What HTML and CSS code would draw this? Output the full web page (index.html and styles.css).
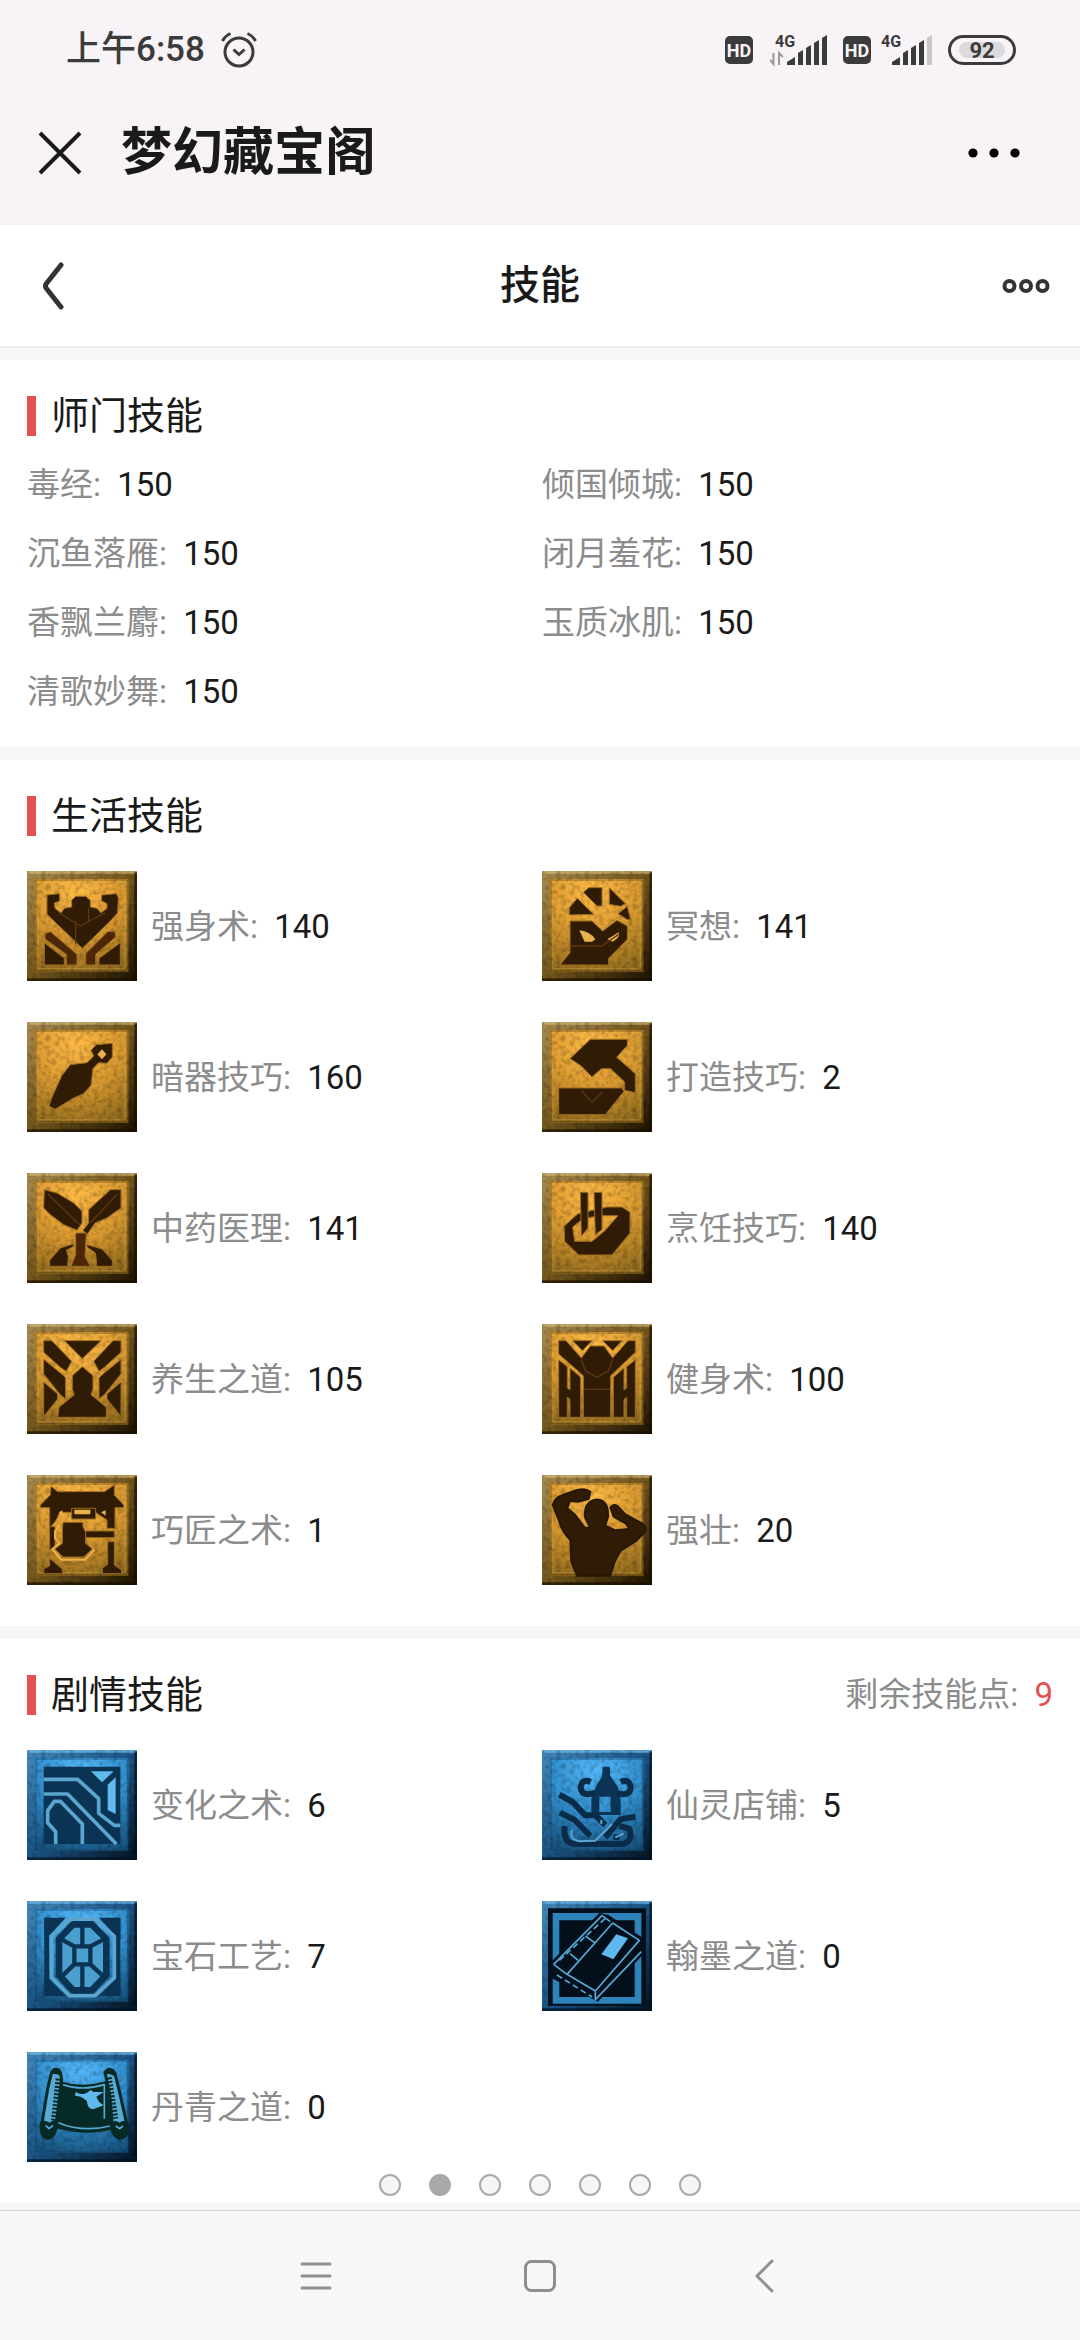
FILE: index.html
```html
<!DOCTYPE html>
<html lang="zh-CN">
<head>
  <meta charset="UTF-8">
  <title>梦幻藏宝阁 - 技能</title>
  <meta name="viewport" content="width=device-width, initial-scale=1">
  <link rel="stylesheet" href="styles.css">
</head>
<body>
  <!-- shared tile backgrounds and filters -->
  <svg class="defs" width="0" height="0" aria-hidden="true">
    <defs>
      <radialGradient id="goldFace" cx="45%" cy="12%" r="95%">
        <stop offset="0" stop-color="#ffba45"/>
        <stop offset="0.5" stop-color="#dd9c31"/>
        <stop offset="1" stop-color="#8f6a1e"/>
      </radialGradient>
      <linearGradient id="goldEdge" x1="0" y1="0" x2="1" y2="1">
        <stop offset="0" stop-color="#a98c50"/>
        <stop offset="0.5" stop-color="#76581e"/>
        <stop offset="1" stop-color="#1d1302"/>
      </linearGradient>
      <radialGradient id="blueFace" cx="50%" cy="10%" r="100%">
        <stop offset="0" stop-color="#52b8fa"/>
        <stop offset="0.5" stop-color="#3290cf"/>
        <stop offset="1" stop-color="#164f79"/>
      </radialGradient>
      <linearGradient id="blueEdge" x1="0" y1="0" x2="1" y2="1">
        <stop offset="0" stop-color="#4489bb"/>
        <stop offset="0.5" stop-color="#1c5687"/>
        <stop offset="1" stop-color="#041423"/>
      </linearGradient>
      <filter id="noise" x="0" y="0" width="100%" height="100%">
        <feTurbulence type="fractalNoise" baseFrequency="0.07" numOctaves="3" seed="4"/>
        <feColorMatrix values="0 0 0 0 0  0 0 0 0 0  0 0 0 0 0  1.8 0 0 0 -0.75"/>
      </filter>
      <filter id="soft" x="-5%" y="-5%" width="110%" height="110%">
        <feGaussianBlur stdDeviation="2"/>
      </filter>
    </defs>
    <symbol id="gold" viewBox="0 0 330 330">
      <rect width="330" height="330" fill="url(#goldEdge)"/>
      <path d="M0 0H330V8H0z" fill="#d3b878" opacity="0.7"/>
      <path d="M322 4H330V330H0V322H322z" fill="#191002" opacity="0.7"/>
      <rect x="24" y="24" width="280" height="278" fill="url(#goldFace)" filter="url(#soft)"/>
      <rect x="27" y="27" width="274" height="272" fill="none" stroke="#5d420f" stroke-width="3" opacity="0.6"/>
      <rect x="33" y="33" width="262" height="260" fill="none" stroke="#e8b65a" stroke-width="4" opacity="0.3"/>
      <rect width="330" height="330" filter="url(#noise)" opacity="0.3"/>
    </symbol>
    <symbol id="blue" viewBox="0 0 330 330">
      <rect width="330" height="330" fill="url(#blueEdge)"/>
      <path d="M0 0H330V8H0z" fill="#6fb7e6" opacity="0.8"/>
      <path d="M322 4H330V330H0V322H322z" fill="#031222" opacity="0.7"/>
      <rect x="24" y="24" width="280" height="278" fill="url(#blueFace)" filter="url(#soft)"/>
      <rect x="27" y="27" width="274" height="272" fill="none" stroke="#114a75" stroke-width="3" opacity="0.7"/>
      <rect width="330" height="330" filter="url(#noise)" opacity="0.3"/>
    </symbol>
    <symbol id="bars" viewBox="0 0 40 30">
      <path d="M0 30V27L8 22V30zM11 30V18L16 15V30zM19 30V13L24 10V30zM27 30V8L32 5V30z"/>
    </symbol>
  </svg>

  <header class="app-header">
    <div class="status-bar">
      <div class="status-left">
        <span class="clock">上午6:58</span>
        <svg class="alarm" viewBox="0 0 36 36" width="36" height="36">
          <circle cx="18" cy="20" r="14"/>
          <path d="M12.500 17.500L18 22.500L23.500 17.500M1.500 9Q4 4 9.500 1.500M34.500 9Q32 4 26.500 1.500"/>
        </svg>
      </div>
      <div class="status-right">
        <span class="hd">HD</span>
        <svg class="signal first" viewBox="0 -8 58 50" width="58" height="50">
          <text x="5" y="14">4G</text>
          <use href="#bars" x="17" y="2" width="40" height="30"/>
          <path d="M52 32V5L57 2V32z"/>
          <path class="traffic" d="M3.500 20V31L0 27M9 32V20L13 24"/>
        </svg>
        <span class="hd">HD</span>
        <svg class="signal" viewBox="0 -8 53 50" width="53" height="50">
          <text x="1" y="14">4G</text>
          <use href="#bars" x="12" y="2" width="40" height="30"/>
          <path class="faint" d="M47 32V5L52 2V32z"/>
        </svg>
        <span class="battery"><span class="level">92</span></span>
      </div>
    </div>
    <div class="title-bar">
      <button class="icon-btn" aria-label="关闭">
        <svg viewBox="0 0 44 44" width="44" height="44"><path d="M2 2L42 42M42 2L2 42" stroke="#1a1a1c" stroke-width="4"/></svg>
      </button>
      <h1>梦幻藏宝阁</h1>
      <button class="icon-btn" aria-label="更多">
        <svg viewBox="0 0 52 10" width="52" height="10" fill="#000"><circle cx="5" cy="5" r="4.600"/><circle cx="26" cy="5" r="4.600"/><circle cx="47" cy="5" r="4.600"/></svg>
      </button>
    </div>
  </header>

  <nav class="page-nav">
    <button class="icon-btn back" aria-label="返回">
      <svg viewBox="0 0 22 48" width="22" height="48"><path d="M19 3L4 22Q3 24 4 26L19 45" fill="none" stroke="#333" stroke-width="5" stroke-linecap="round"/></svg>
    </button>
    <h2>技能</h2>
    <button class="icon-btn menu" aria-label="菜单">
      <svg viewBox="0 0 48 16" width="48" height="16" fill="none" stroke="#333" stroke-width="4"><circle cx="7.500" cy="8" r="5"/><circle cx="24" cy="8" r="5"/><circle cx="40.500" cy="8" r="5"/></svg>
    </button>
  </nav>

  <main>
    <section class="panel">
      <div class="panel-head"><h3>师门技能</h3></div>
      <ul class="skills plain">
        <li>毒经: <b>150</b></li>
        <li>倾国倾城: <b>150</b></li>
        <li>沉鱼落雁: <b>150</b></li>
        <li>闭月羞花: <b>150</b></li>
        <li>香飘兰麝: <b>150</b></li>
        <li>玉质冰肌: <b>150</b></li>
        <li>清歌妙舞: <b>150</b></li>
      </ul>
    </section>

    <section class="panel">
      <div class="panel-head"><h3>生活技能</h3></div>
      <ul class="skills with-icons">
        <li>
          <svg class="tile gold" viewBox="0 0 330 330">
            <use href="#gold"/>
            <path d="M60 72L98 68V90L82 96L84 112L102 126L112 112L134 108V88L146 76H176L190 88V108L210 112L222 126L240 112V98L224 90V72L268 68L274 80L272 125L250 150L166 232L60 130z"/>
            <path d="M54 188L70 182L150 250V282H118V250L54 204zM264 182H242L176 248V282H206V250L266 198z" class="warm"/>
            <path d="M52 215L112 262V282H52zM280 215L216 262V282H280z"/>
            <path class="crease" d="M95 125L160 165L235 125M146 150V220M185 110V150"/>
          </svg>
          <span>强身术: <b>140</b></span>
        </li>
        <li>
          <svg class="tile gold" viewBox="0 0 330 330">
            <use href="#gold"/>
            <path d="M82 132V110L106 82L155 130zM124 64L140 50H180V105H165zM202 50L250 98L236 106L202 100zM228 128L256 106L266 146H256z"/>
            <path d="M84 150H150L182 180L225 148L256 165V205L200 262V282H54L84 245z"/>
            <path class="light" d="M112 178Q145 182 160 205L150 212H128zM196 205L230 184Q236 200 212 212z"/>
            <path class="crease" d="M86 225H180L230 190"/>
          </svg>
          <span>冥想: <b>141</b></span>
        </li>
        <li>
          <svg class="tile gold" viewBox="0 0 330 330">
            <use href="#gold"/>
            <path d="M66 252L75 225L105 160L130 128L180 122L200 102L192 85L208 68L256 64V105L240 124L215 122L198 140L192 190L170 215L140 228L84 262z"/>
            <path class="light" d="M225 82L238 97L225 112L211 97z"/>
          </svg>
          <span>暗器技巧: <b>160</b></span>
        </li>
        <li>
          <svg class="tile gold" viewBox="0 0 330 330">
            <use href="#gold"/>
            <path d="M84 110L145 52H256V70L224 106L280 155V212L248 205V180L206 140H178L150 165L118 132z"/>
            <path d="M50 198H240L246 208L190 278H50z"/>
            <path class="crease" d="M118 205L150 242L180 210"/>
          </svg>
          <span>打造技巧: <b>2</b></span>
        </li>
        <li>
          <svg class="tile gold" viewBox="0 0 330 330">
            <use href="#gold"/>
            <path d="M52 50L90 60L140 90L165 115V150L150 172L110 155L70 125L50 105z"/>
            <path d="M282 50H250L185 110V150L168 172L180 185L204 150L240 135L282 105z"/>
            <path class="warm" d="M146 180H178L174 250L190 280H132L146 245z"/>
            <path d="M68 280V262L100 225L140 212V220L118 232L124 250L122 280zM256 280V262L225 228L180 215V222L205 240L208 262V280z"/>
            <path class="crease" d="M62 62L158 155M272 62L190 150"/>
          </svg>
          <span>中药医理: <b>141</b></span>
        </li>
        <li>
          <svg class="tile gold" viewBox="0 0 330 330">
            <use href="#gold"/>
            <path fill-rule="evenodd" d="M66 160L108 122L195 102H240L264 118V180L210 246H110L68 205zM92 162L122 138L170 128H228L190 172L150 205H98z"/>
            <path d="M115 58H138V165L118 190zM156 58H180V170L160 185z"/>
          </svg>
          <span>烹饪技巧: <b>140</b></span>
        </li>
        <li>
          <svg class="tile gold" viewBox="0 0 330 330">
            <use href="#gold"/>
            <path d="M112 50H222L166 104z"/>
            <path d="M50 50H74L134 112L118 142L100 130L50 85zM50 106L104 150L116 162V225L100 212L50 150zM50 174L92 210V225L50 278z"/>
            <path d="M282 50H258L200 112L216 142L232 130L282 85zM282 106L228 150L216 162V225L232 212L282 150zM282 174L240 210V225L282 278z"/>
            <path d="M166 128L198 155V195L192 212L238 250V280H92L96 250L142 212L136 195V155z"/>
          </svg>
          <span>养生之道: <b>105</b></span>
        </li>
        <li>
          <svg class="tile gold" viewBox="0 0 330 330">
            <use href="#gold"/>
            <path d="M50 50H72L118 102L145 66H186L212 102L258 50H280V85L206 155V280H124V155L50 90z"/>
            <path class="crease" d="M118 105L130 140L165 160L200 140L212 105M126 196H204"/>
            <path d="M92 50H150L121 80zM182 50H240L212 80z"/>
            <path d="M50 108L76 128V192L84 198V132L116 160V280H84V226L76 220V280H50zM280 108L254 128V192L246 198V132L214 160V280H246V226L254 220V280H280z"/>
          </svg>
          <span>健身术: <b>100</b></span>
        </li>
        <li>
          <svg class="tile gold" viewBox="0 0 330 330">
            <use href="#gold"/>
            <path d="M72 34L92 50H232L262 30V60L290 90V98H264V160H240V135L205 112H98L88 135L68 160V98H40V90L70 60z"/>
            <path d="M242 200H262V270L284 285V296H226V280L242 268zM68 250L106 282V296H50V282L68 272zM68 155H84V215L68 225z"/>
            <path d="M134 100H206V132H134z"/>
            <path d="M174 168H262V188H174z"/>
            <path class="outline" d="M98 150L84 170V190L98 205L76 222L102 254H175L202 224"/>
            <path d="M108 142H168V155L176 172V205L196 222L170 246H108L84 222L106 205V170z"/>
            <path class="light" d="M142 104H190V118H142zM96 112L106 106V122zM222 112L236 106V122z"/>
          </svg>
          <span>巧匠之术: <b>1</b></span>
        </li>
        <li>
          <svg class="tile gold" viewBox="0 0 330 330">
            <use href="#gold"/>
            <path class="figure" d="M32 90Q40 66 62 60L105 45Q130 38 145 50L140 72L108 80L84 78Q78 92 76 100L100 120L128 158L145 158L130 130Q124 95 145 80Q165 68 182 78Q200 90 198 125L190 152L220 166L262 162L252 146L215 125L205 98Q215 84 228 94L250 118L300 145Q316 158 308 172L282 198L235 228L218 260L205 302H105L88 260L85 195Q60 170 52 140z"/>
          </svg>
          <span>强壮: <b>20</b></span>
        </li>
      </ul>
    </section>

    <section class="panel">
      <div class="panel-head">
        <h3>剧情技能</h3>
        <p class="points">剩余技能点: <b>9</b></p>
      </div>
      <ul class="skills with-icons">
        <li>
          <svg class="tile blue" viewBox="0 0 330 330">
            <use href="#blue"/>
            <path d="M50 50H280V282H50z"/>
            <path class="light" d="M192 64H260L225 97zM242 104L266 82V192L242 180z"/>
            <path class="outline" d="M50 88H152L215 146V190L262 226H280M50 132H122L268 282M86 282V245L62 218V182L82 154H100L166 222V282"/>
          </svg>
          <span>变化之术: <b>6</b></span>
        </li>
        <li>
          <svg class="tile blue" viewBox="0 0 330 330">
            <use href="#blue"/>
            <path fill-rule="evenodd" d="M182 50H204V76L228 112L236 150V195H148V145L164 105L180 80zM172 140H206V186H172z"/>
            <path class="curl" d="M160 128Q118 142 116 112Q120 84 146 96M226 130Q266 140 266 112Q262 84 236 96"/>
            <path class="curl" d="M52 134L92 156L130 196H160L190 225M54 188L98 210L145 258M280 200L235 208L190 262M68 228Q62 280 100 282H240Q274 276 262 236L232 228M232 262H214"/>
            <path class="outline thin" d="M90 240Q80 268 112 274L160 272L210 222M220 262L245 250M178 210V222"/>
          </svg>
          <span>仙灵店铺: <b>5</b></span>
        </li>
        <li>
          <svg class="tile blue" viewBox="0 0 330 330">
            <use href="#blue"/>
            <path d="M52 50H116L76 94L52 116zM280 50H216L256 94L280 116zM52 285H116L76 244L52 222zM280 285H216L256 244L280 222z"/>
            <path d="M52 50H66V285H52zM266 50H280V285H266z"/>
            <path class="outline" d="M128 54H204L262 106V230L204 284H128L74 230V106z"/>
            <path class="ring" d="M138 70H194L238 114V222L194 268H138L96 222V114z"/>
            <path class="spoke" d="M166 70V130M166 196V268M142 136H190V190H142zM142 136L98 112M190 136L236 112M142 190L98 232M190 190L236 232"/>
          </svg>
          <span>宝石工艺: <b>7</b></span>
        </li>
        <li>
          <svg class="tile blue" viewBox="0 0 330 330">
            <use href="#blue"/>
            <path class="night" d="M18 22H312V314H18z"/>
            <path class="sheen" d="M32 36H298V308H32z"/>
            <path class="night" d="M52 58H278V288H52z"/>
            <path class="night" d="M30 180L172 36L200 42L304 112V160L168 302L30 232z"/>
            <path class="pen" d="M75 220L212 66L292 118L160 270zM160 270V296L298 152M35 190L180 44L205 62M35 190L75 220M130 105L158 125M84 158L108 178"/>
            <path class="pen dashed" d="M52 178L190 52M45 222L150 288"/>
            <path class="light" d="M223 100L258 112L214 175L178 160z"/>
          </svg>
          <span>翰墨之道: <b>0</b></span>
        </li>
        <li>
          <svg class="tile blue" viewBox="0 0 330 330">
            <use href="#blue"/>
            <path class="green" d="M100 88Q165 108 238 88L256 232Q180 254 84 228z"/>
            <path class="pen" d="M108 98Q165 118 232 98V200M94 212Q165 242 250 222"/>
            <path class="light" d="M145 120Q172 134 190 114L200 120H230L208 134L216 150L230 160L198 172Q180 170 180 148Q165 132 145 132z"/>
            <path class="roll" d="M74 60L100 64L104 82L88 215L44 220L62 110zM234 60L264 64L280 130L300 220L256 222L248 130z"/>
            <path class="green" d="M70 62Q76 44 92 48Q108 54 106 76L92 66zM232 64Q236 44 252 48Q270 54 268 76L250 66zM38 212Q50 200 68 212Q84 196 94 214Q90 262 60 264Q34 256 38 212zM248 216Q262 200 278 212Q294 198 308 216Q310 258 280 264Q250 258 248 216z"/>
            <path class="pen hatch" d="M94 80L80 205M246 76L266 200"/>
            <path class="pen" d="M56 220L66 230L78 220M266 222L278 230L288 222"/>
          </svg>
          <span>丹青之道: <b>0</b></span>
        </li>
      </ul>
    </section>

    <div class="pager">
      <button aria-label="第1页"></button>
      <button class="active" aria-label="第2页"></button>
      <button aria-label="第3页"></button>
      <button aria-label="第4页"></button>
      <button aria-label="第5页"></button>
      <button aria-label="第6页"></button>
      <button aria-label="第7页"></button>
    </div>
  </main>

  <footer class="system-nav">
    <button class="icon-btn" aria-label="最近任务">
      <svg viewBox="0 0 34 34" width="34" height="34"><path d="M3 5H31M3 17H31M3 29H31"/></svg>
    </button>
    <button class="icon-btn" aria-label="主屏幕">
      <svg viewBox="0 0 34 34" width="34" height="34"><rect x="2.500" y="2.500" width="29" height="29" rx="6"/></svg>
    </button>
    <button class="icon-btn" aria-label="返回上一级">
      <svg viewBox="0 0 34 34" width="34" height="34"><path d="M25 2L10 17L25 32"/></svg>
    </button>
  </footer>
</body>
</html>
```

FILE: styles.css
```css
:root {
  --header: #f7f3f7;
  --gap: #f6f6f6;
  --text: #1a1a1a;
  --muted: #8c8c8c;
  --red: #e55050;
  --status: #3b3b3b;
}
* {
  box-sizing: border-box;
}
body {
  margin: 0;
  min-height: 100vh;
  display: flex;
  flex-direction: column;
  background: var(--gap);
  color: var(--text);
  font-family: Roboto, "Noto Sans CJK SC", sans-serif;
  font-size: 33px;
}
h1, h2, h3, p, ul {
  margin: 0;
  padding: 0;
}
ul {
  list-style: none;
}
b {
  font-weight: 400;
}
svg {
  display: block;
  flex: none;
}
.defs {
  position: absolute;
}
.icon-btn {
  display: flex;
  padding: 0;
  border: none;
  background: none;
  cursor: pointer;
}

/* header */
.app-header {
  background: var(--header);
  height: 225px;
}
.status-bar {
  height: 100px;
  padding: 0 64px 0 66px;
  display: flex;
  align-items: center;
  justify-content: space-between;
  color: var(--status);
}
.status-left, .status-right {
  display: flex;
  align-items: center;
}
.status-left {
  gap: 16px;
}
.clock {
  font-size: 35px;
  font-weight: 500;
  line-height: 40px;
}
.alarm {
  fill: none;
  stroke: var(--status);
  stroke-width: 3;
}
.hd {
  width: 28px;
  height: 28px;
  border-radius: 5px;
  background: var(--status);
  color: var(--header);
  font-size: 18px;
  font-weight: 700;
  line-height: 29px;
  text-align: center;
}
.signal {
  margin: 0 15px 0 9px;
  fill: var(--status);
  font-size: 16px;
  font-weight: 700;
}
.signal.first {
  margin-left: 17px;
}
.signal .faint {
  fill: #c9c5c9;
}
.signal .traffic {
  fill: none;
  stroke: #9b989b;
  stroke-width: 2;
}
.battery {
  width: 68px;
  height: 30px;
  padding: 4px 8px;
  border: 3px solid var(--status);
  border-radius: 15px;
}
.level {
  display: block;
  height: 16px;
  border-radius: 8px;
  background: #dcdadc;
  font-size: 22px;
  font-weight: 700;
  line-height: 17px;
  text-align: center;
}
.title-bar {
  height: 106px;
  padding: 0 60px 0 38px;
  display: flex;
  align-items: center;
}
.title-bar h1 {
  flex: 1;
  margin-left: 39px;
  font-size: 51px;
  font-weight: 700;
  line-height: 60px;
}

/* page nav */
.page-nav {
  height: 123px;
  padding: 0 30px;
  display: grid;
  grid-template-columns: 60px 1fr 60px;
  align-items: center;
  background: #fff;
  border-bottom: 2px solid #eee;
}
.page-nav h2 {
  font-size: 40px;
  font-weight: 500;
  line-height: 50px;
  text-align: center;
}
.back {
  padding-left: 12px;
}
.menu {
  justify-self: end;
}

/* skill panels */
main {
  position: relative;
  flex: 1;
  padding: 12px 0 6px;
  display: flex;
  flex-direction: column;
  gap: 13px;
}
.panel {
  background: #fff;
  padding: 36px 27px 21px;
}
.panel-head {
  height: 39px;
  margin-bottom: 15px;
  display: flex;
  align-items: center;
  justify-content: space-between;
}
.panel-head h3 {
  border-left: 9px solid var(--red);
  padding-left: 15px;
  font-size: 38px;
  font-weight: 400;
  line-height: 40px;
}
.points {
  color: var(--muted);
  line-height: 40px;
}
.points b {
  margin-left: 8px;
  color: var(--red);
}
.skills {
  display: grid;
  grid-template-columns: 1fr 1fr;
  column-gap: 4px;
  color: var(--muted);
}
.skills b {
  margin-left: 8px;
  color: var(--text);
}
.plain li {
  line-height: 69px;
}
.with-icons {
  row-gap: 41px;
  padding: 21px 0 20px;
}
.with-icons li {
  display: flex;
  align-items: center;
  gap: 14px;
}
.with-icons span {
  padding-bottom: 4px;
}

/* skill tiles */
.tile {
  width: 110px;
  height: 110px;
}
.tile path {
  stroke-linejoin: round;
}
.gold path {
  fill: #301b04;
  stroke: #9c6d20;
  stroke-width: 3;
}
.gold .warm {
  fill: #4b2708;
}
.gold .light {
  fill: #eab24c;
  stroke: none;
}
.gold .crease {
  fill: none;
  stroke: #5d3710;
  stroke-width: 4;
}
.gold .outline {
  fill: none;
  stroke: #ecb34b;
  stroke-width: 6;
}
.gold .figure {
  stroke: #261704;
  stroke-width: 6;
}
.blue path {
  fill: #0b3354;
}
.blue .light {
  fill: #60b9ec;
}
.blue .outline {
  fill: none;
  stroke: #5aa6cf;
  stroke-width: 11;
}
.blue .thin {
  stroke-width: 6;
}
.blue .ring {
  fill: #4a9fcf;
  stroke: #0b3354;
  stroke-width: 20;
}
.blue .spoke {
  fill: none;
  stroke: #0b3354;
  stroke-width: 13;
}
.blue .curl {
  fill: none;
  stroke: #0b2c48;
  stroke-width: 18;
}
.blue .night {
  fill: #030f1b;
}
.blue .sheen {
  fill: #2f83bb;
}
.blue .green {
  fill: #062a26;
}
.blue .roll {
  fill: #5aa9d2;
  stroke: #062a26;
  stroke-width: 9;
}
.blue .pen {
  fill: none;
  stroke: #57a9d6;
  stroke-width: 5;
}
.blue .dashed {
  stroke-dasharray: 18 10;
}
.blue .hatch {
  stroke: #062a26;
  stroke-width: 16;
  stroke-dasharray: 6 5;
}

/* page dots, float over the list */
.pager {
  position: absolute;
  left: 0;
  right: 0;
  bottom: 14px;
  display: flex;
  justify-content: center;
  gap: 28px;
}
.pager button {
  width: 22px;
  height: 22px;
  padding: 0;
  border: 2px solid #a9a9a9;
  border-radius: 50%;
  background: #f6f6f6;
}
.pager .active {
  background: #aaa8aa;
}

/* system buttons */
.system-nav {
  height: 130px;
  border-top: 1px solid #d9d9d9;
  background: #f7f7f7;
  display: flex;
  align-items: center;
  justify-content: center;
  gap: 190px;
}
.system-nav svg {
  fill: none;
  stroke: #8f8f8f;
  stroke-width: 3;
  stroke-linecap: round;
  stroke-linejoin: round;
}
```
